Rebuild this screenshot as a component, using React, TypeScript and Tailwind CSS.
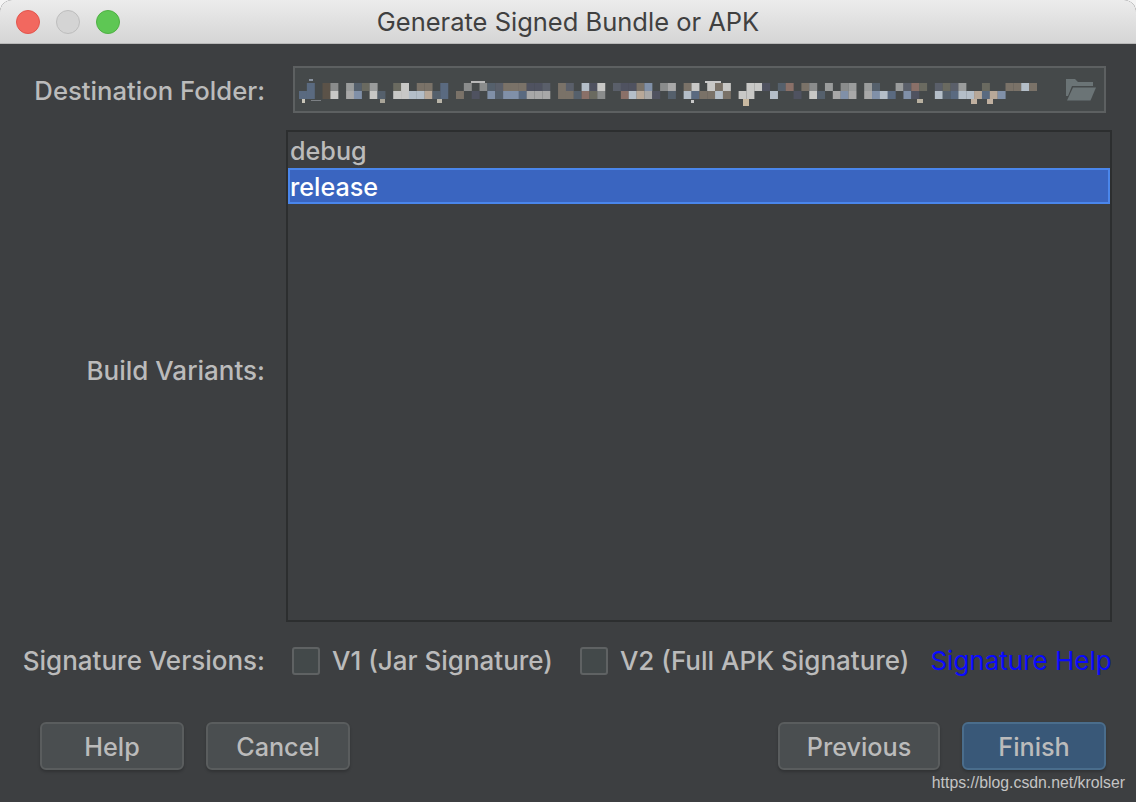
const palette: Record<string, string> = {
  a: "#5a6a80",
  b: "#5b5248",
  c: "#8a8c8c",
  d: "#c8c8c6",
  e: "#9a9c9c",
  f: "#55606c",
  g: "#a8a8a8",
  h: "#6a6a60",
  i: "#8090a8",
  j: "#b8a898",
  k: "#5a5f6a",
  l: "#4f5260",
  m: "#7a7268",
  n: "#b4bec8",
  o: "#8a7068",
};

// two rows of pixelated path, one letter per 8px cell, "." leaves the field colour
const mosaicTop =
  ".a.bc.efhe..hd.mm.a..c.cfkmmmllk.mk.nld.kllmi.cg.md.dmd..dd l.fo.mc.e.ce.ef..ekoh.khke..h..mmnm".replace(/ /g, "");
const mosaicBottom =
  "aa.bd.gi.df.ddnnjfa.m.l.ifiiaggg.mmfohc..onjgl.f.nammnm.dd..n..l.df.gig.gina.il..nfannjaji".replace(/ /g, "");

function Mosaic() {
  return (
    <svg width="745" height="32" viewBox="0 0 745 32" className="mt-[2px] shrink-0 blur-[0.6px]">
      {[mosaicTop, mosaicBottom].map((row, y) =>
        row.split("").map((ch, x) =>
          palette[ch] ? (
            <rect key={`${y}-${x}`} x={x * 7.85} y={8 + y * 8} width="7.95" height="8" fill={palette[ch]} />
          ) : null,
        ),
      )}
      <rect x="3" y="24" width="3" height="4" fill="#c8c4b8" />
      <rect x="12" y="25" width="10" height="1" fill="#7c8084" />
      <rect x="81" y="24" width="5" height="4" fill="#a8a498" />
      <rect x="138" y="24" width="5" height="4" fill="#b8b4a8" />
      <rect x="10" y="4" width="4" height="2" fill="#8a93a0" />
      <rect x="172" y="6" width="14" height="2" fill="#b8b8b8" />
      <rect x="406" y="6" width="16" height="2" fill="#c8c8c8" />
      <rect x="392" y="25" width="3" height="3" fill="#c8c8c8" />
      <rect x="444" y="24" width="6" height="7" fill="#c8b8a0" />
      <rect x="618" y="24" width="6" height="4" fill="#b8b0a0" />
      <rect x="672" y="24" width="6" height="5" fill="#c0b0a0" />
      <rect x="688" y="24" width="6" height="5" fill="#c0b0a0" />
    </svg>
  );
}

function FolderIcon() {
  return (
    <svg width="30" height="23" viewBox="0 0 30 23" className="shrink-0">
      <path d="M0 1h9l3 3h15v4H6L2 18H0z" fill="#6b7476" />
      <path d="M7 9.5h23L24.5 22.5H1z" fill="#6b7476" />
    </svg>
  );
}

function Check({ label }: { label: string }) {
  return (
    <div className="flex items-center gap-[12px]">
      <div className="h-[28px] w-[28px] rounded-[3px] border-2 border-[#5f6263] bg-[#43494a]" />
      <span>{label}</span>
    </div>
  );
}

function Btn({ label, width, primary }: { label: string; width: string; primary?: boolean }) {
  return (
    <button
      className={`flex h-[48px] items-center justify-center rounded-[6px] border-2 pt-[4px] shadow-[0_2px_3px_rgba(0,0,0,0.2)] ${width} ${
        primary ? "border-[#4a6d8c] bg-[#395878]" : "border-[#5a5d5e] bg-[#4a4e50]"
      }`}
    >
      {label}
    </button>
  );
}

export default function App() {
  return (
    <div className="h-[802px] w-[1136px] bg-[#f4f4f4] text-[26px] font-[450] leading-none text-[#bbbbbb] [font-family:Inter,'Noto_Sans',sans-serif]">
      <div className="relative flex h-full flex-col overflow-hidden rounded-t-[12px] bg-[#3d3f41]">
        <div className="relative flex h-[44px] shrink-0 items-center justify-center border-b border-[#b8b8b8] bg-gradient-to-b from-[#ececec] to-[#d5d5d5] text-[25.5px] font-normal text-[#404040]">
          <div className="absolute left-[16px] flex gap-[16px]">
            <div className="h-[24px] w-[24px] rounded-full border border-[#e2554d] bg-[#f2685f]" />
            <div className="h-[24px] w-[24px] rounded-full border border-[#bdbdbd] bg-[#d4d4d4]" />
            <div className="h-[24px] w-[24px] rounded-full border border-[#4fb044] bg-[#5ec754]" />
          </div>
          <span>Generate Signed Bundle or APK</span>
        </div>

        <div className="mt-[22px] flex items-center">
          <div className="w-[265px] pt-[2px] text-right text-[25.7px]">Destination Folder:</div>
          <div className="ml-[28px] flex h-[47px] w-[813px] items-center justify-between border-2 border-[#5d6061] bg-[#45494a] pl-[4px] pr-[8px]">
            <Mosaic />
            <FolderIcon />
          </div>
        </div>

        <div className="mt-[17px] flex items-center">
          <div className="mb-[10px] w-[265px] text-right">Build Variants:</div>
          <div className="ml-[21px] flex h-[492px] w-[826px] flex-col border-2 border-[#2c2e2f] bg-[#3d3f41] pt-[1px] text-[25.2px]">
            <div className="flex h-[35px] items-center pl-[2px] pt-[2px]">debug</div>
            <div className="flex h-[36px] items-center border-2 border-[#4a86ec] bg-[#3a65c0] pt-[4px] text-white">release</div>
          </div>
        </div>

        <div className="mt-[24px] flex h-[30px] items-center">
          <div className="w-[265px] text-right">Signature Versions:</div>
          <div className="ml-[27px]">
            <Check label="V1 (Jar Signature)" />
          </div>
          <div className="ml-[27px]">
            <Check label="V2 (Full APK Signature)" />
          </div>
          <a className="ml-[21px] font-normal text-[#0a0aff]">Signature Help</a>
        </div>

        <div className="mt-[46px] flex justify-between pl-[40px] pr-[30px] text-[25.2px]">
          <div className="flex gap-[22px]">
            <Btn label="Help" width="w-[144px]" />
            <Btn label="Cancel" width="w-[144px]" />
          </div>
          <div className="flex gap-[22px]">
            <Btn label="Previous" width="w-[162px]" />
            <Btn label="Finish" width="w-[144px]" primary />
          </div>
        </div>

        <div className="absolute bottom-[11px] right-[11px] text-[15.8px] font-normal text-[#c4c4c4] [font-family:'Liberation_Sans',sans-serif]">
          https://blog.csdn.net/krolser
        </div>
      </div>
    </div>
  );
}
